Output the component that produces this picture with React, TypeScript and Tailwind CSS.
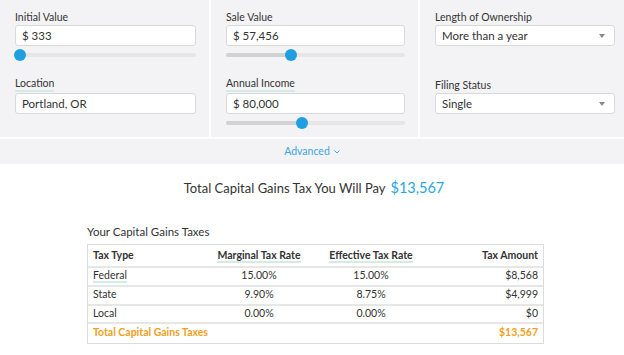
import React from "react";

function Label({ text, tip = false }: { text: string; tip?: boolean }) {
  return (
    <div className="h-[14px] flex items-end">
      <span
        className={
          "text-[10.5px] leading-[13px] text-[#333] " +
          (tip ? "border-b-2 border-[#d6ebe4]" : "")
        }
      >
        {text}
      </span>
    </div>
  );
}

function Input({ value }: { value: string }) {
  return (
    <div className="mt-[1px] h-[21px] bg-white border border-[#d9d9d9] rounded-[3px] flex items-center pl-[6px] text-[11.5px] text-[#333]">
      {value}
    </div>
  );
}

function Select({ value }: { value: string }) {
  return (
    <div className="mt-[1px] h-[21px] bg-white border border-[#d9d9d9] rounded-[3px] flex items-center justify-between pl-[6px] pr-[9px] text-[11.5px] text-[#333]">
      <span>{value}</span>
      <svg width="6" height="4" viewBox="0 0 6 4">
        <path d="M0 0 L6 0 L3 4 Z" fill="#888" />
      </svg>
    </div>
  );
}

function Slider({ fill, thumb }: { fill: string; thumb: string }) {
  return (
    <div className="h-[18px] flex items-center">
      <div className="relative w-full h-[4px] rounded-full bg-[#e6e6e6]">
        <div className={"absolute left-0 top-0 h-[4px] rounded-full bg-[#d2d2d2] " + fill} />
        <div
          className={
            "absolute top-[-4px] w-[12px] h-[12px] rounded-full bg-[#1f9fe0] " + thumb
          }
        />
      </div>
    </div>
  );
}

const Spacer = () => <div className="h-[18px]" />;

const row = "grid grid-cols-[116px_110px_114px_1fr] items-center";

export default function App() {
  return (
    <div className="w-[624px] h-[355px] bg-white overflow-hidden font-['Lato',sans-serif] text-[#333]">
      <div className="grid grid-cols-[209px_207px_1fr] gap-x-[2px] bg-white">
        <div className="bg-[#f3f3f5] pt-[10px] pb-[5px] pl-[15px] pr-[13px]">
          <Label text="Initial Value" />
          <Input value="$ 333" />
          <Slider fill="w-[6px]" thumb="left-[-1px]" />
          <div className="mt-[14px]">
            <Label text="Location" tip />
            <Input value="Portland, OR" />
            <Spacer />
          </div>
        </div>
        <div className="bg-[#f3f3f5] pt-[10px] pb-[5px] pl-[15px] pr-[13px]">
          <Label text="Sale Value" />
          <Input value="$ 57,456" />
          <Slider fill="w-[66px]" thumb="left-[59px]" />
          <div className="mt-[14px]">
            <Label text="Annual Income" tip />
            <Input value="$ 80,000" />
            <Slider fill="w-[76px]" thumb="left-[70px]" />
          </div>
        </div>
        <div className="bg-[#f3f3f5] pt-[10px] pb-[5px] pl-[15px] pr-[9px]">
          <Label text="Length of Ownership" />
          <Select value="More than a year" />
          <Spacer />
          <div className="mt-[14px]">
            <Label text="Filing Status" />
            <Select value="Single" />
            <Spacer />
          </div>
        </div>
      </div>
      <div className="mt-[2px] h-[25px] bg-[#f3f3f5] flex items-center justify-center gap-[4px] text-[10.5px] text-[#3aa6de]">
        <span>Advanced</span>
        <svg width="6" height="4" viewBox="0 0 6 4" className="mt-[1px]">
          <path d="M0.5 0.5 L3 3 L5.5 0.5" fill="none" stroke="#3aa6de" strokeWidth="1" />
        </svg>
      </div>
      <div className="mt-[13px] flex justify-center items-baseline gap-[5px] pl-[4px]">
        <span className="text-[13px] text-[#333]">Total Capital Gains Tax You Will Pay</span>
        <span className="text-[14.5px] text-[#27a6e0]">$13,567</span>
      </div>
      <div className="ml-[87px] w-[457px] mt-[26px]">
        <div className="text-[11.5px] leading-[14px] text-[#333]">Your Capital Gains Taxes</div>
        <div className="mt-[5px] border border-[#dcdcdc] text-[10.5px] text-[#333]">
          <div className={row + " h-[23px] pt-[1px] border-b-2 border-[#e6e6e6] font-bold"}>
            <div className="pl-[5px]">Tax Type</div>
            <div className="text-center">
              <span className="border-b-2 border-[#d6ebe4]">Marginal Tax Rate</span>
            </div>
            <div className="text-center">
              <span className="border-b-2 border-[#d6ebe4]">Effective Tax Rate</span>
            </div>
            <div className="text-right pr-[5px]">Tax Amount</div>
          </div>
          <div className={row + " h-[19px] border-b-2 border-[#e6e6e6]"}>
            <div className="pl-[5px]">
              <span className="border-b-2 border-[#d6ebe4]">Federal</span>
            </div>
            <div className="text-center">15.00%</div>
            <div className="text-center">15.00%</div>
            <div className="text-right pr-[5px]">$8,568</div>
          </div>
          <div className={row + " h-[19px] border-b-2 border-[#e6e6e6]"}>
            <div className="pl-[5px]">State</div>
            <div className="text-center">9.90%</div>
            <div className="text-center">8.75%</div>
            <div className="text-right pr-[5px]">$4,999</div>
          </div>
          <div className={row + " h-[18px] border-b-2 border-[#e6e6e6]"}>
            <div className="pl-[5px]">Local</div>
            <div className="text-center">0.00%</div>
            <div className="text-center">0.00%</div>
            <div className="text-right pr-[5px]">$0</div>
          </div>
          <div className={row + " h-[19px] font-bold text-[#f0a11c]"}>
            <div className="pl-[5px] whitespace-nowrap">Total Capital Gains Taxes</div>
            <div />
            <div />
            <div className="text-right pr-[5px]">$13,567</div>
          </div>
        </div>
      </div>
    </div>
  );
}
